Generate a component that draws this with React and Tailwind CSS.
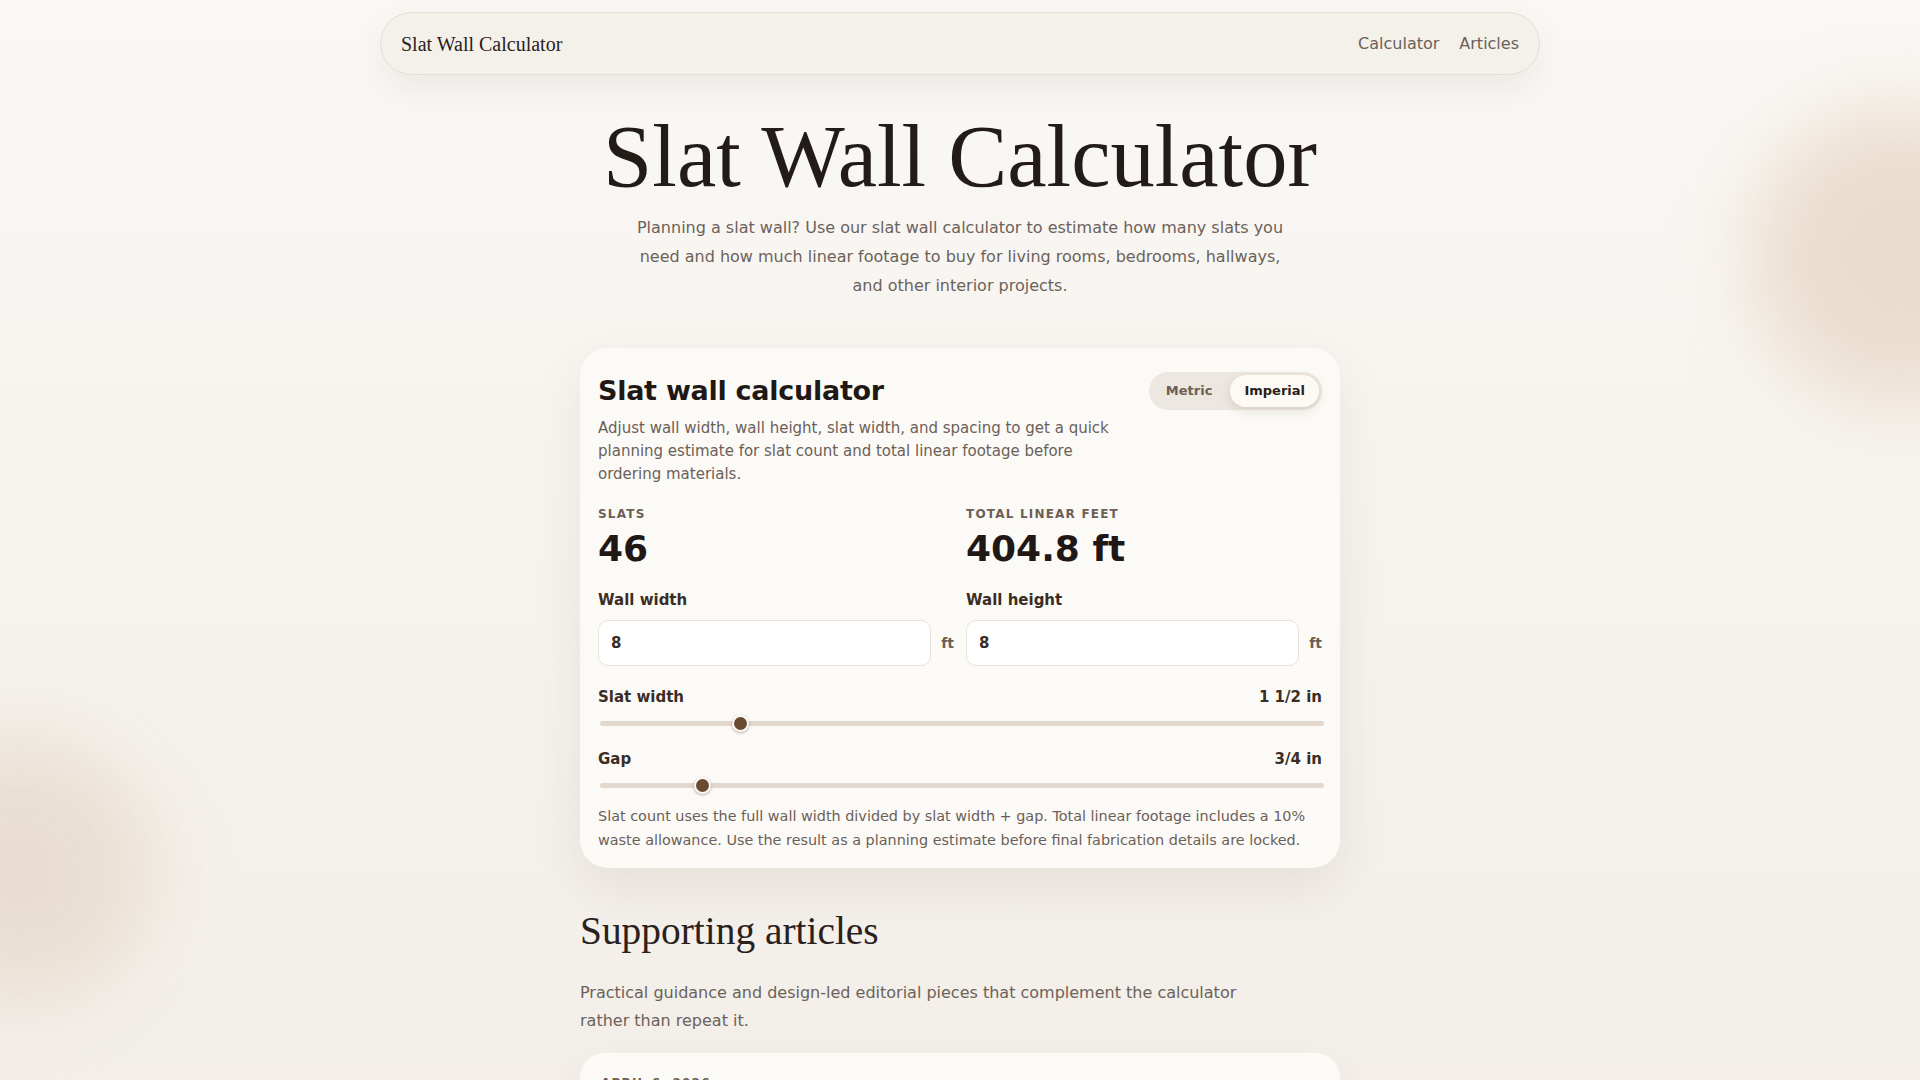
import React from "react";

function Slider({ label, display, value, min, max, className }) {
  const pct = (value - min) / (max - min);
  return (
    <div className={className}>
      <div className="flex items-center justify-between text-[15px] font-bold leading-5 text-[#3a2d25]">
        <span>{label}</span>
        <span>{display}</span>
      </div>
      <div className="relative mt-[8px] h-[17px]">
        <div className="absolute left-[2px] right-[-2px] top-[6px] h-[5px] rounded-full bg-[#e2d8ce]" />
        <div
          className="absolute top-0 h-[17px] w-[17px] rounded-full border-2 border-[#fdfaf6] bg-[#6b4a33] shadow-[0_1px_3px_rgba(60,35,20,0.35)]"
          style={{ left: `calc(${pct * 100}% - ${pct * 17 - 1.5}px)` }}
        />
      </div>
    </div>
  );
}

function NumberField({ label, value, unit }) {
  return (
    <div>
      <div className="text-[15px] font-bold leading-5 text-[#3a2d25]">{label}</div>
      <div className="mt-[10px] flex items-center gap-[10px]">
        <input
          readOnly
          value={value}
          className="h-[46px] min-w-0 flex-1 rounded-[10px] border border-[#e8e2db] bg-white px-[12px] text-[15px] font-bold text-[#3a2d25] outline-none"
        />
        <span className="text-[14px] font-bold text-[#6b5f55]">{unit}</span>
      </div>
    </div>
  );
}

export default function App() {
  return (
    <div className="relative min-h-screen overflow-hidden bg-[linear-gradient(180deg,#faf8f5_0%,#f5f1ec_55%,#f2ede7_100%)] font-['DejaVu_Sans',sans-serif] text-[#211a16]">
      <div className="pointer-events-none absolute right-[-130px] top-[105px] h-[300px] w-[300px] rounded-full bg-[#e7d7c6] opacity-80 blur-[40px]" />
      <div className="pointer-events-none absolute left-[-110px] top-[740px] h-[260px] w-[260px] rounded-full bg-[#e8dccf] opacity-90 blur-[40px]" />

      <div className="relative">
        <header className="mx-auto mt-3 flex h-[63px] w-[1160px] items-center justify-between rounded-full border border-[#e4ded6] bg-[#f4f0ea] px-5 shadow-[0_14px_34px_rgba(70,45,25,0.07)]">
          <span className="font-['Liberation_Serif',serif] text-[20px] text-[#2a211c]">Slat Wall Calculator</span>
          <nav className="flex gap-5 text-[16px] text-[#6b625a]">
            <a href="#calculator">Calculator</a>
            <a href="#articles">Articles</a>
          </nav>
        </header>

        <main className="mx-auto w-[760px] pt-[33px] pb-16">
          <section className="text-center">
            <h1 className="font-['Liberation_Serif',serif] text-[88.5px] font-normal leading-[1.1] text-[#221b17]">
              Slat Wall Calculator
            </h1>
            <p className="mx-auto mt-[9px] max-w-[660px] text-[16px] leading-[1.8] text-[#6b625a]">
              Planning a slat wall? Use our slat wall calculator to estimate how many slats you need and how much linear footage to buy for living rooms, bedrooms, hallways, and other interior projects.
            </p>
          </section>

          <section id="calculator" className="mt-[47px] rounded-[28px] bg-[#fcfaf7] px-[18px] pt-6 pb-[16px] shadow-[0_22px_50px_rgba(70,45,25,0.08)]">
            <div className="flex items-start justify-between gap-6">
              <div className="max-w-[530px]">
                <h2 className="text-[27px] font-bold leading-[38px] tracking-[-0.01em] text-[#1f1814]">Slat wall calculator</h2>
                <p className="mt-[7px] text-[15px] leading-[23px] text-[#6b6058]">
                  Adjust wall width, wall height, slat width, and spacing to get a quick planning estimate for slat count and total linear footage before ordering materials.
                </p>
              </div>
              <div className="flex h-[38px] shrink-0 items-center gap-1 rounded-full bg-[#ece7e0] p-[3px]">
                <button className="h-8 rounded-full px-[14px] text-[13px] font-bold text-[#6b5f55]">Metric</button>
                <button className="h-8 rounded-full bg-[#fdfaf6] px-[14px] text-[13px] font-bold text-[#2a1f1a] shadow-[0_4px_12px_rgba(70,45,25,0.12)]">Imperial</button>
              </div>
            </div>

            <div className="mt-[20px] grid grid-cols-2 gap-x-3">
              <div>
                <div className="text-[12px] font-bold uppercase leading-4 tracking-[0.1em] text-[#6b5f55]">Slats</div>
                <div className="mt-[7px] text-[36px] font-bold leading-[1.1] text-[#1f1814]">46</div>
              </div>
              <div>
                <div className="text-[12px] font-bold uppercase leading-4 tracking-[0.1em] text-[#6b5f55]">Total linear feet</div>
                <div className="mt-[7px] text-[36px] font-bold leading-[1.1] text-[#1f1814]">404.8 ft</div>
              </div>
            </div>

            <div className="mt-[22px] grid grid-cols-2 gap-x-3">
              <NumberField label="Wall width" value="8" unit="ft" />
              <NumberField label="Wall height" value="8" unit="ft" />
            </div>

            <Slider className="mt-[21px]" label="Slat width" display="1 1/2 in" value={1.5} min={0.75} max={4.75} />
            <Slider className="mt-[17px]" label="Gap" display="3/4 in" value={0.75} min={0.25} max={4} />

            <p className="mt-[11px] text-[14.4px] leading-[23.3px] text-[#6b6058]">
              Slat count uses the full wall width divided by slat width + gap. Total linear footage includes a 10% waste allowance. Use the result as a planning estimate before final fabrication details are locked.
            </p>
          </section>

          <section id="articles" className="mt-[40px]">
            <h2 className="font-['Liberation_Serif',serif] text-[39.4px] font-normal leading-[1.2] text-[#2a211c]">Supporting articles</h2>
            <p className="mt-[24px] max-w-[680px] text-[16px] leading-[28.2px] text-[#6b625a]">
              Practical guidance and design-led editorial pieces that complement the calculator rather than repeat it.
            </p>
            <article className="mt-[17px] rounded-[24px] bg-[#fcfaf7] px-[21px] pt-[22px] pb-6 shadow-[0_18px_40px_rgba(70,45,25,0.06)]">
              <div className="text-[12px] font-bold uppercase leading-4 tracking-[0.1em] text-[#6b5f55]">April 6, 2026</div>
              <h3 className="mt-3 font-['Liberation_Serif',serif] text-[28px] leading-[1.2] text-[#2a211c]">How to plan slat spacing for a balanced wall</h3>
              <p className="mt-2 text-[15px] leading-[23px] text-[#6b6058]">
                A practical look at choosing slat widths and gaps that suit the proportions of your room.
              </p>
            </article>
          </section>
        </main>
      </div>
    </div>
  );
}
